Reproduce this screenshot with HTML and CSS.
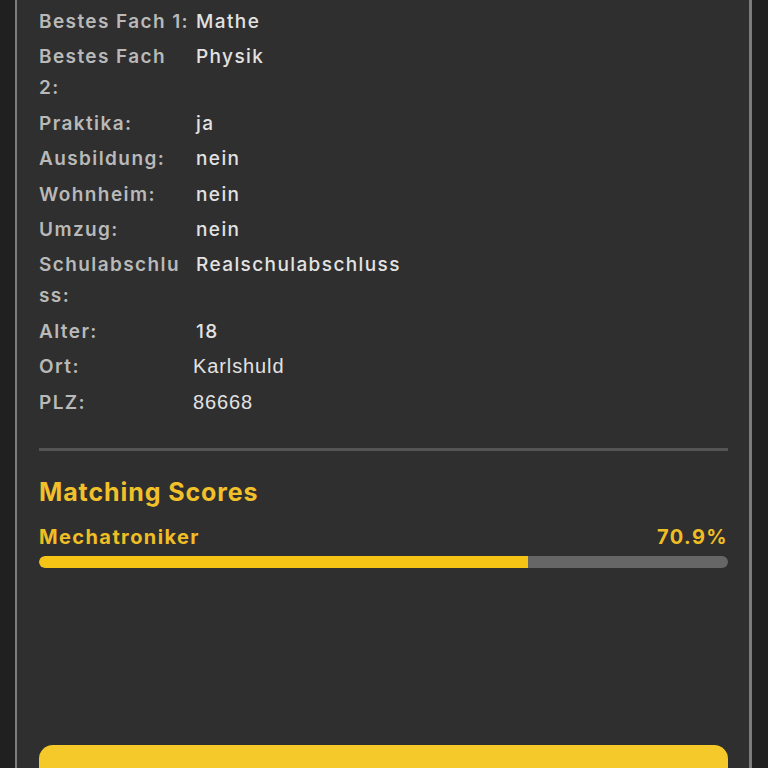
FILE: index.html
```html
<!DOCTYPE html>
<html lang="de">
<head>
<meta charset="utf-8">
<title>Profil</title>
<link rel="stylesheet" href="styles.css">
</head>
<body>
<div class="card">
  <div class="details">
    <div class="row"><span class="label">Bestes Fach 1:</span><span class="value">Mathe</span></div>
    <div class="row"><span class="label">Bestes Fach<br>2:</span><span class="value">Physik</span></div>
    <div class="row"><span class="label">Praktika:</span><span class="value">ja</span></div>
    <div class="row"><span class="label">Ausbildung:</span><span class="value">nein</span></div>
    <div class="row"><span class="label">Wohnheim:</span><span class="value">nein</span></div>
    <div class="row"><span class="label">Umzug:</span><span class="value">nein</span></div>
    <div class="row"><span class="label">Schulabschlu<br>ss:</span><span class="value">Realschulabschluss</span></div>
    <div class="row"><span class="label">Alter:</span><span class="value">18</span></div>
    <div class="row"><span class="label">Ort:</span><span class="value plain">Karlshuld</span></div>
    <div class="row"><span class="label">PLZ:</span><span class="value plain">86668</span></div>
  </div>
  <hr class="sep">
  <h2 class="heading">Matching Scores</h2>
  <div class="score">
    <div class="score-head"><span>Mechatroniker</span><span>70.9%</span></div>
    <div class="track"><div class="fill" style="width:70.9%"></div></div>
  </div>
  <div class="spacer"></div>
  <button class="cta" aria-label="Weiter"></button>
</div>
</body>
</html>
```
FILE: styles.css
```css
html, body {
  margin: 0;
  padding: 0;
  background: #202020;
  height: 768px;
  overflow: hidden;
}
body {
  font-family: "Inter", "Roboto", sans-serif;
}
.card {
  margin-left: 15px;
  width: 737px;
  box-sizing: border-box;
  background: #2f2f2f;
  border-left: 2px solid #7c7c7c;
  border-right: 3px solid #7c7c7c;
  padding: 6px 21px 0 22px;
  min-height: 900px;
}
.details {
  display: flex;
  flex-direction: column;
  gap: 4.4px;
}
.row {
  display: grid;
  grid-template-columns: 157px 1fr;
  font-size: 19px;
  line-height: 31px;
  font-weight: 600;
  letter-spacing: 1.4px;
}
.label {
  color: #b9b9b9;
  white-space: nowrap;
}
.value {
  color: #e2e2e2;
  font-weight: 500;
}
.value.plain {
  font-family: "Liberation Sans", sans-serif;
  font-weight: 400;
  letter-spacing: 0.9px;
  margin-left: -3px;
  font-size: 20px;
}
.sep {
  border: none;
  height: 3px;
  background: #545454;
  margin: 30px 0 0 0;
}
.heading {
  margin: 26px 0 0 0;
  color: #f2c12a;
  font-size: 25px;
  line-height: 30px;
  font-weight: 700;
  letter-spacing: 0.9px;
}
.score {
  margin-top: 15px;
}
.score-head {
  display: flex;
  justify-content: space-between;
  color: #efbe25;
  font-size: 20px;
  line-height: 30px;
  font-weight: 700;
  letter-spacing: 1.4px;
}
.track {
  margin-top: 4px;
  height: 12px;
  border-radius: 6px;
  background: #666666;
  overflow: hidden;
}
.fill {
  height: 100%;
  background: #f5c415;
  border-radius: 6px 0 0 6px;
}
.spacer {
  height: 177px;
}
.cta {
  display: block;
  width: 100%;
  height: 56px;
  border: none;
  border-radius: 14px;
  background: #f6c92b;
}
```
